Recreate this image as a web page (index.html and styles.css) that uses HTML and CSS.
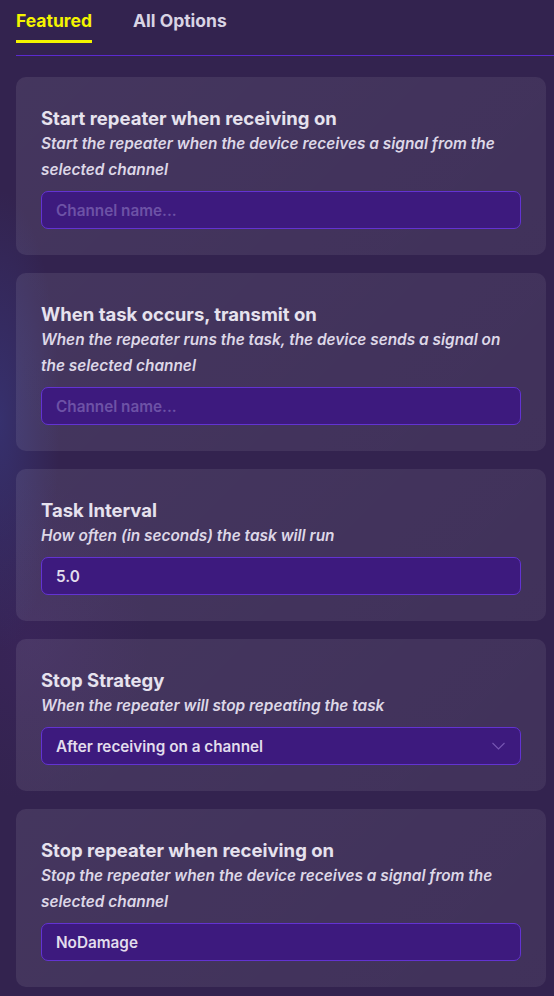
FILE: index.html
```html
<!DOCTYPE html>
<html>
<head>
<meta charset="utf-8">
<link rel="stylesheet" href="styles.css">
</head>
<body>
<div class="page">
  <div class="tabs">
    <div class="tab active">Featured</div>
    <div class="tab">All Options</div>
  </div>
  <div class="cards">
    <div class="card">
      <div class="title">Start repeater when receiving on</div>
      <div class="desc">Start the repeater when the device receives a signal from the selected channel</div>
      <div class="field placeholder">Channel name...</div>
    </div>
    <div class="card">
      <div class="title">When task occurs, transmit on</div>
      <div class="desc">When the repeater runs the task, the device sends a signal on the selected channel</div>
      <div class="field placeholder">Channel name...</div>
    </div>
    <div class="card">
      <div class="title">Task Interval</div>
      <div class="desc">How often (in seconds) the task will run</div>
      <div class="field">5.0</div>
    </div>
    <div class="card">
      <div class="title">Stop Strategy</div>
      <div class="desc">When the repeater will stop repeating the task</div>
      <div class="field select">
        <span>After receiving on a channel</span>
        <svg class="chev" width="13" height="8" viewBox="0 0 13 8"><path d="M0.5 1 L6.5 7 L12.5 1" fill="none" stroke="#7656b2" stroke-width="1.1"/></svg>
      </div>
    </div>
    <div class="card">
      <div class="title">Stop repeater when receiving on</div>
      <div class="desc">Stop the repeater when the device receives a signal from the selected channel</div>
      <div class="field">NoDamage</div>
    </div>
  </div>
</div>
</body>
</html>
```

FILE: styles.css
```css
html, body {
  margin: 0;
  padding: 0;
}
body {
  width: 554px;
  height: 996px;
  overflow: hidden;
  font-family: Inter, "Noto Sans", sans-serif;
  background-color: #33234f;
  background-image:
    radial-gradient(ellipse 60px 230px at 0px 420px, rgba(58, 62, 140, 0.5), rgba(58, 62, 140, 0) 100%),
    radial-gradient(ellipse 120px 160px at 30px 640px, rgba(70, 40, 110, 0.3), rgba(70, 40, 110, 0) 100%);
}
.page {
  padding: 0 0 0 16px;
}
.tabs {
  display: flex;
  gap: 41px;
  border-bottom: 1px solid #5b2ad0;
  height: 56px;
  box-sizing: border-box;
}
.tab {
  font-size: 17.5px;
  font-weight: 700;
  color: #d9d4e4;
  padding-top: 9px;
  line-height: 24px;
}
.tab.active {
  color: #f4f400;
  border-bottom: 3px solid #f4f400;
  margin-bottom: -1px;
  height: 43px;
  box-sizing: border-box;
}
.cards {
  display: flex;
  flex-direction: column;
  gap: 18px;
  padding-top: 21px;
  width: 530px;
}
.card {
  background: linear-gradient(135deg, rgba(255,255,255,0.085), rgba(255,255,255,0.065));
  border-radius: 10px;
  padding: 28px 25px 26px 25px;
}
.title {
  font-size: 18.5px;
  font-weight: 700;
  line-height: 26px;
  color: #e6e2ee;
}
.desc {
  font-size: 15.4px;
  font-weight: 600;
  font-style: italic;
  line-height: 26px;
  color: #ddd7e7;
}
.field {
  margin-top: 8px;
  height: 38px;
  box-sizing: border-box;
  background: #3d1a7e;
  border: 1px solid #6333d2;
  border-radius: 7px;
  padding: 0 14px 0 14px;
  display: flex;
  align-items: center;
  font-size: 15.3px;
  font-weight: 600;
  color: #e2ddec;
}
.field.placeholder {
  color: #6d52a6;
}
.select {
  justify-content: space-between;
}
.chev {
  margin-right: 1px;
}
```
